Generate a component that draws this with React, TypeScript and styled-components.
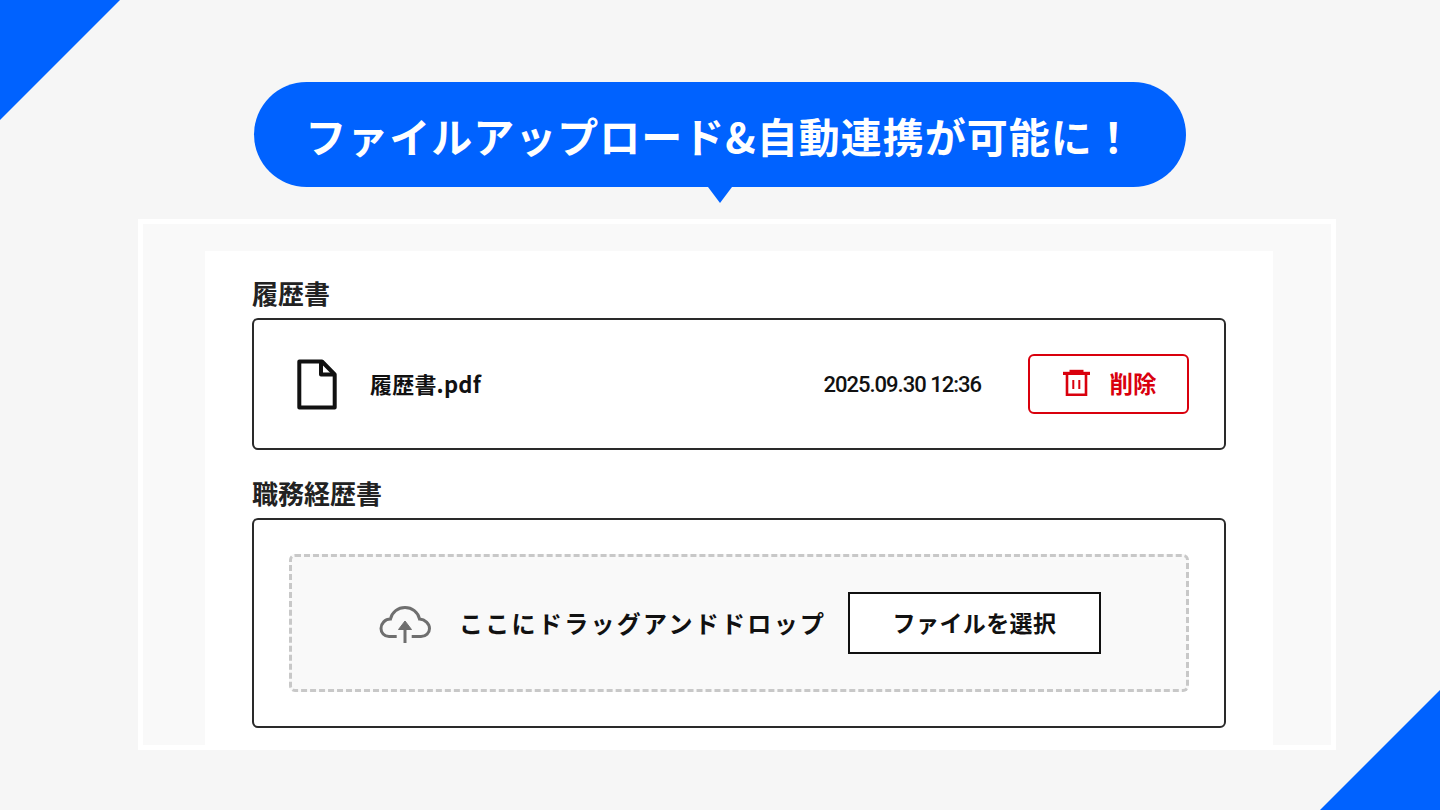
import * as React from "react";
import styled, { createGlobalStyle } from "styled-components";

const FONT = '"Noto Sans CJK JP", "Noto Sans", sans-serif';

const Global = createGlobalStyle`
  html, body {
    margin: 0;
    padding: 0;
    background: #f5f5f5;
  }
  * {
    box-sizing: border-box;
  }
`;

const Page = styled.div`
  position: relative;
  width: 1440px;
  height: 810px;
  overflow: hidden;
  padding-top: 82px;
  display: flex;
  flex-direction: column;
  align-items: center;
  background: #f6f6f6;
  font-family: ${FONT};
`;

const Corner = styled.div<{ $side: "top" | "bottom" }>`
  position: absolute;
  width: 120px;
  height: 120px;
  background: #0062ff;
  ${(p) =>
    p.$side === "top"
      ? "top: 0; left: 0; clip-path: polygon(0 0, 100% 0, 0 100%);"
      : "bottom: 0; right: 0; clip-path: polygon(100% 0, 100% 100%, 0 100%);"}
`;

const Bubble = styled.div`
  position: relative;
  width: 932px;
  height: 105px;
  border-radius: 53px;
  background: #0062ff;
  color: #fff;
  font-size: 41px;
  font-weight: 700;
  letter-spacing: 1px;
  display: flex;
  align-items: center;
  justify-content: center;
  &::after {
    content: "";
    position: absolute;
    left: 454px;
    top: 105px;
    border-top: 16px solid #0062ff;
    border-left: 12px solid transparent;
    border-right: 12px solid transparent;
  }
`;

const Frame = styled.div`
  align-self: flex-start;
  width: 1198px;
  height: 531px;
  margin-top: 32px;
  margin-left: 138px;
  border: 5px solid #fff;
  background: #f9f9f9;
  padding: 27px 58px 0 62px;
  display: flex;
`;

const Card = styled.div`
  flex: 1;
  background: #fff;
  padding: 24px 47px 0;
`;

const Label = styled.div`
  height: 43px;
  font-size: 26px;
  line-height: 36px;
  font-weight: 700;
  color: #222;
`;

const Box = styled.div<{ $height: number }>`
  height: ${(p) => p.$height}px;
  border: 2px solid #2a2a2a;
  border-radius: 6px;
  margin-bottom: 25px;
`;

const FileRow = styled.div`
  height: 100%;
  display: flex;
  align-items: center;
  padding: 0 35px 0 43px;
`;

const FileIcon = styled.svg`
  width: 40px;
  height: 51px;
  margin-right: 33px;
  flex: none;
`;

const FileName = styled.div`
  flex: 1;
  font-size: 22px;
  font-weight: 700;
  letter-spacing: 0.2px;
  color: #111;
  margin-bottom: 2px;
`;

const Stamp = styled.div`
  font-family: Roboto, ${FONT};
  font-size: 22px;
  font-weight: 500;
  letter-spacing: -1px;
  color: #111;
  margin-right: 47px;
  margin-top: 1px;
`;

const DeleteButton = styled.button`
  width: 161px;
  height: 60px;
  border: 2px solid #d9000d;
  border-radius: 6px;
  background: #fff;
  color: #d9000d;
  font-family: ${FONT};
  font-size: 23.5px;
  font-weight: 700;
  display: flex;
  align-items: center;
  justify-content: center;
  gap: 20px;
  padding: 0 0 2px 2px;
`;

const DropZone = styled.div`
  margin: 34px 35px;
  height: 138px;
  border: 3px dashed #c8c8c8;
  border-radius: 6px;
  background: #f9f9f9;
  display: flex;
  align-items: center;
  padding-left: 87px;
`;

const CloudIcon = styled.svg`
  width: 54px;
  height: 40px;
  flex: none;
  margin-right: 26px;
  margin-top: 2px;
`;

const DropText = styled.div`
  font-size: 24px;
  font-weight: 700;
  letter-spacing: 2.3px;
  color: #111;
  white-space: nowrap;
  width: 389px;
  margin-bottom: 2px;
`;

const SelectButton = styled.button`
  width: 253px;
  height: 62px;
  border: 2px solid #111;
  background: #fff;
  color: #111;
  font-family: ${FONT};
  font-size: 23px;
  font-weight: 700;
  letter-spacing: 0.4px;
  padding: 0 0 3px;
`;

export default function App() {
  return (
    <Page>
      <Global />
      <Corner $side="top" />
      <Corner $side="bottom" />
      <Bubble>ファイルアップロード&amp;自動連携が可能に！</Bubble>
      <Frame>
        <Card>
          <Label>履歴書</Label>
          <Box $height={132}>
            <FileRow>
              <FileIcon viewBox="0 0 40 51" fill="none" stroke="#111" strokeWidth="4" strokeLinejoin="round">
                <path d="M2.3 2.5H25L37.7 15.5V48.5H2.3Z" />
                <path d="M24 2.5V15.5H37.7" />
              </FileIcon>
              <FileName>履歴書.pdf</FileName>
              <Stamp>2025.09.30 12:36</Stamp>
              <DeleteButton>
                <svg width="27" height="28" viewBox="0 0 27 28" fill="none" stroke="#d9000d">
                  <path d="M0 4.4H27" strokeWidth="3.2" />
                  <path d="M6.5 2H20.5" strokeWidth="2.4" />
                  <path d="M4 6V25.7H23V6" strokeWidth="2.6" />
                  <path d="M10.3 11V20M16.3 11V20" strokeWidth="2" />
                </svg>
                削除
              </DeleteButton>
            </FileRow>
          </Box>
          <Label>職務経歴書</Label>
          <Box $height={210}>
            <DropZone>
              <CloudIcon viewBox="0 0 54 40" fill="none" stroke="#6f6f6f" strokeWidth="3">
                <path d="M17.7 32.5H10C5 32.5 2 28.5 2 24.5C2 19.5 6 15 11.5 15C13 8 19 3.5 26 3.5C33 3.5 39 8 40.5 15C46 15.5 50.5 19.5 50.5 24.5C50.5 29 47 32.5 42 32.5H32.7" />
                <path d="M26 39V22" />
                <path d="M19.5 25.5L26 17L32.5 25.5Z" fill="#6f6f6f" strokeWidth="1" />
              </CloudIcon>
              <DropText>ここにドラッグアンドドロップ</DropText>
              <SelectButton>ファイルを選択</SelectButton>
            </DropZone>
          </Box>
        </Card>
      </Frame>
    </Page>
  );
}
